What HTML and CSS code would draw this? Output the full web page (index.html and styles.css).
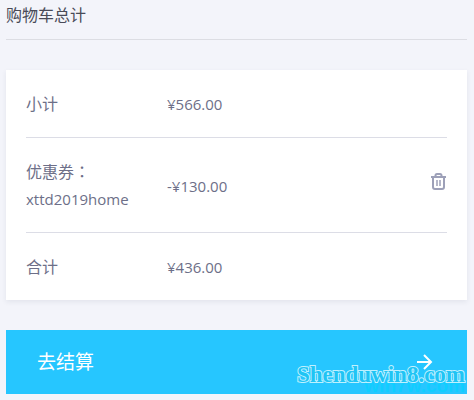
FILE: index.html
```html
<!DOCTYPE html>
<html lang="zh-CN">
<head>
<meta charset="utf-8">
<meta name="viewport" content="width=device-width, initial-scale=1">
<title>购物车总计</title>
<link rel="stylesheet" href="styles.css">
</head>
<body>
<main class="cart">
  <h2 class="cart-title">购物车总计</h2>
  <section class="card">
    <table class="totals">
      <tbody>
        <tr>
          <th scope="row">小计</th>
          <td>¥566.00</td>
          <td class="action"></td>
        </tr>
        <tr>
          <th scope="row">优惠券<span class="colon" lang="zh-TW">：</span><span class="code">xttd2019home</span></th>
          <td>-¥130.00</td>
          <td class="action">
            <button class="remove" type="button" aria-label="移除优惠券">
              <svg width="16" height="18" viewBox="0 0 16 18" fill="none" stroke="currentColor" stroke-width="2">
                <path d="M0 5H15M4.500 5V3.500Q4.500 2 6 2H9Q10.500 2 10.500 3.500V5M2 5V15Q2 17 4 17H11Q13 17 13 15V5"/>
                <path stroke-width="1.500" d="M6 8V14M9 8V14"/>
              </svg>
            </button>
          </td>
        </tr>
        <tr>
          <th scope="row">合计</th>
          <td>¥436.00</td>
          <td class="action"></td>
        </tr>
      </tbody>
    </table>
  </section>
  <div class="checkout-wrap">
    <button class="checkout" type="button">
      <span>去结算</span>
      <svg width="16" height="16" viewBox="0 0 16 16" fill="none" stroke="currentColor" stroke-width="2" aria-hidden="true">
        <path d="M0 8H14M7 1L14 8L7 15"/>
      </svg>
    </button>
    <span class="mark mark-back">win7w.com</span>
    <span class="mark mark-front">Shenduwin8.com</span>
  </div>
</main>
</body>
</html>
```

FILE: styles.css
```css
* {
  box-sizing: border-box;
}

body {
  margin: 0;
  background: #f3f4fa;
  color: #6d6f88;
  font-family: "Open Sans", "Noto Sans CJK SC", sans-serif;
  font-size: 15px;
  line-height: 27px;
}

.cart {
  padding: 0 7px 6px 6px;
}

.cart-title {
  margin: 0 0 30px;
  padding: 2px 0 10px;
  border-bottom: 1px solid #dcdde3;
  color: #494b58;
  font-size: 16px;
  font-weight: 400;
}

.card {
  margin-bottom: 30px;
  padding: 0 20px;
  background: #fff;
  box-shadow: 0 2px 5px rgba(40, 45, 80, 0.08);
}

.totals {
  width: 100%;
  border-collapse: separate;
  border-spacing: 0;
  table-layout: fixed;
}

.totals th,
.totals td {
  padding: 21px 0 19px;
  border-bottom: 1px solid #dcdde6;
  font-weight: 400;
  text-align: left;
  vertical-align: middle;
}

.totals tr:last-child > * {
  border-bottom: 0;
}

.totals th {
  width: 141px;
  font-size: 16px;
}

.colon {
  font-family: "Noto Sans CJK TC", sans-serif;
  line-height: 1;
}

.code {
  display: block;
  font-size: 15px;
}

.totals .action {
  width: 40px;
  padding: 0;
  text-align: right;
}

.remove {
  padding: 0 0 10px;
  border: 0;
  background: none;
  color: #9da0b8;
  line-height: 0;
  cursor: pointer;
}

.checkout-wrap {
  position: relative;
}

.checkout {
  display: flex;
  align-items: center;
  justify-content: space-between;
  width: 100%;
  height: 64px;
  padding: 0 34px 0 31px;
  border: 0;
  background: #26c6ff;
  color: #fff;
  font: inherit;
  font-size: 19px;
  cursor: pointer;
}

.mark {
  position: absolute;
  font-weight: 700;
  pointer-events: none;
}

.mark-front {
  right: 2px;
  bottom: 6px;
  color: #20c4f4;
  font-family: "Liberation Serif", serif;
  font-size: 23px;
  paint-order: stroke;
  -webkit-text-stroke: 2px #bff1ff;
}

.mark-back {
  right: 2px;
  bottom: -2px;
  color: #10ceff;
  font-family: "Liberation Sans", sans-serif;
  font-size: 19px;
  line-height: 20px;
}
```
